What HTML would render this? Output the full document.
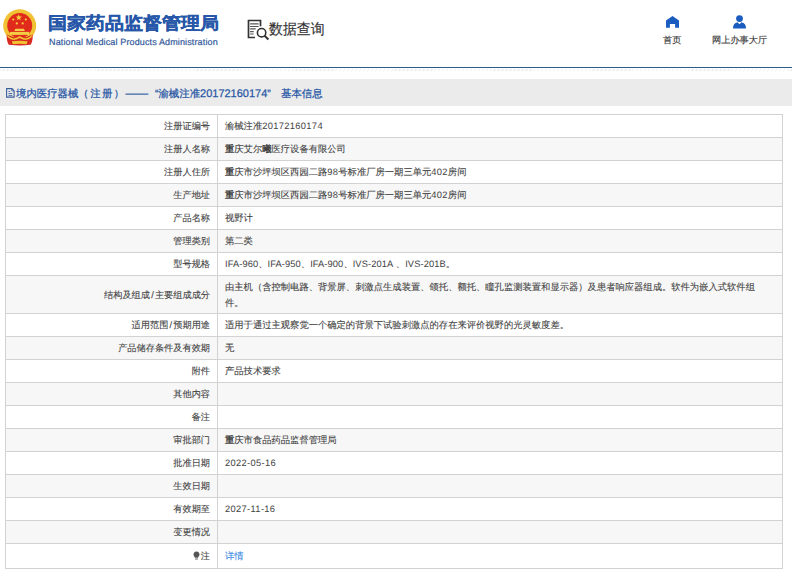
<!DOCTYPE html>
<html><head><meta charset="utf-8">
<style>
*{margin:0;padding:0;box-sizing:border-box}
html,body{width:792px;height:576px;overflow:hidden;background:#fff}
body{position:relative;font-family:"Liberation Sans",sans-serif;color:#333;text-rendering:geometricPrecision}
.abs{position:absolute}
#title{left:48px;top:10px;font-size:19px;font-weight:bold;color:#2757a8;white-space:nowrap;line-height:28px;transform:scaleY(0.91);transform-origin:0 23px;-webkit-text-stroke:0.35px #2757a8}
#sub{left:49px;top:36px;font-size:9px;letter-spacing:0.13px;color:#33599b;-webkit-text-stroke:0.2px #33599b;white-space:nowrap;line-height:12px}
#sq{left:269px;top:18px;font-size:13.9px;color:#333;white-space:nowrap;line-height:20px;transform:scaleY(1.07);transform-origin:0 0;-webkit-text-stroke:0.15px #333}
.nav{font-size:9.2px;color:#3c3c3c;-webkit-text-stroke:0.15px #3c3c3c;white-space:nowrap;line-height:12px}
#bline{left:0;top:67px;width:792px;height:1px;background:#2b5a8a}
#dline{left:0;top:69px;width:792px;height:2px;background:repeating-linear-gradient(135deg,#ebebeb 0 1px,#fff 1px 2.8px)}
#bar{left:0;top:79px;width:792px;height:27px;background:#ebebeb}
#bartxt{left:16px;top:86.5px;font-size:10.4px;color:#2857a5;-webkit-text-stroke:0.25px #2857a5;white-space:nowrap;line-height:15px}
#tbl{left:5px;top:114px;width:778px;height:455px;border:1px solid #d2d2d2}
.row{position:absolute;left:0;width:776px;border-bottom:1px solid #d2d2d2}
.row.g{background:#f7f7f7}
.lab{position:absolute;left:0;width:212px;top:0;bottom:0;border-right:1px solid #d2d2d2}
.lab span{position:absolute;right:7px;white-space:nowrap}
.val{position:absolute;left:219px;white-space:nowrap;font-size:9.3px!important}
.t{font-size:9.2px;color:#424242;line-height:12px;-webkit-text-stroke:0.1px #424242}
.d{letter-spacing:0.1px;-webkit-text-stroke:0}
.n{letter-spacing:0.35px;-webkit-text-stroke:0}
b{font-weight:bold;-webkit-text-stroke:0}
.bd{font-size:11px;position:static!important}
#bartxt>span{position:absolute;top:0}
</style></head><body>
<!-- emblem -->
<svg class="abs" style="left:0;top:5px" width="40" height="45" viewBox="0 5 40 45">
  <circle cx="19.7" cy="25.7" r="16.5" fill="#f0c234"/>
  <circle cx="19.7" cy="25.6" r="12.5" fill="#df2a1c"/>
  <path d="M6.8 34.5 Q6.3 41 8.8 44.8 Q19.7 46.3 30.6 44.8 Q33.1 41 32.6 34.5 Q26 38 19.7 37.5 Q13.4 38 6.8 34.5 Z" fill="#d92a1f"/>
  <rect x="10" y="31.9" width="19.3" height="3" fill="#f3cc45"/>
  <path d="M14.3 31 L15.4 28.7 H23.9 L24.9 31 Z" fill="#f3cc45"/>
  <polygon points="18.8,14.3 19.6,16.6 22,16.6 20.1,18 20.8,20.3 18.8,18.9 16.8,20.3 17.5,18 15.6,16.6 18,16.6" fill="#f7d23d"/>
  <circle cx="13.3" cy="19.5" r="1.1" fill="#f7d23d"/>
  <circle cx="25.8" cy="19.5" r="1.1" fill="#f7d23d"/>
  <circle cx="16.8" cy="23.4" r="1.1" fill="#f7d23d"/>
  <circle cx="22.7" cy="23.4" r="1.1" fill="#f7d23d"/>
  <path d="M7.2 34.8 Q10.5 38.3 13.5 38.4 Q16.5 38.3 19.7 36 Q22.9 38.3 25.9 38.4 Q28.9 38.3 32.2 34.8 L31.6 37.3 Q28.5 40 25.9 40.1 Q22.9 40 19.7 38.1 Q16.5 40 13.5 40.1 Q10.9 40 7.8 37.3 Z" fill="#f0c234"/>
  <path d="M11.8 41.3 Q19.7 40 27.6 41.3 L26.6 44.2 Q19.7 43.2 12.8 44.2 Z" fill="#f0c234"/>
</svg>
<div id="title" class="abs">国家药品监督管理局</div>
<div id="sub" class="abs">National Medical Products Administration</div>
<!-- search icon -->
<svg class="abs" style="left:246px;top:18px" width="26" height="26" viewBox="0 0 26 26">
  <path d="M14.5 8.3 V2.5 H2.5 V19.5 H9" fill="none" stroke="#333" stroke-width="1.7"/>
  <path d="M4.1 5.8 H12.6 M4.1 8.5 H12.6 M4.1 10.9 H9.7 M4.1 13.6 H7.7 M4.1 16 H7.7" stroke="#555" stroke-width="1.2"/>
  <circle cx="15.6" cy="14.7" r="4.2" fill="#fff" stroke="#333" stroke-width="1.6"/>
  <path d="M18.6 17.7 L22.4 21.5" stroke="#333" stroke-width="2"/>
</svg>
<div id="sq" class="abs">数据查询</div>
<!-- home icon -->
<svg class="abs" style="left:664px;top:14px" width="18" height="16" viewBox="0 0 18 16">
  <path d="M2 6.5 L8.5 2 L15 6.5 V13.7 H11.1 V9.9 H5.9 V13.7 H2 Z" fill="#1a5cbf"/>
</svg>
<div class="abs nav" style="left:663px;top:34px">首页</div>
<!-- user icon -->
<svg class="abs" style="left:730px;top:12px" width="20" height="18" viewBox="0 0 20 18">
  <circle cx="9.5" cy="6.6" r="3.4" fill="#1a5cbf"/>
  <path d="M3 16.5 Q3 11 7.5 10.2 L9.5 12.2 L11.5 10.2 Q16 11 16 16.5 Z" fill="#1a5cbf"/>
</svg>
<div class="abs nav" style="left:712px;top:34px">网上办事大厅</div>

<div id="bline" class="abs"></div>
<div id="dline" class="abs"></div>
<div id="bar" class="abs"></div>
<svg class="abs" style="left:0;top:80px" width="20" height="22" viewBox="0 80 20 22">
  <path d="M6.6 88.6 H12 L14.1 90.7 V97.1 H6.6 Z" fill="none" stroke="#3a5d9c" stroke-width="1.1"/>
  <path d="M11.8 88.8 V90.9 H14" fill="none" stroke="#3a5d9c" stroke-width="0.9"/>
  <path d="M8.5 91.5 H10.2 M8.5 93.5 H12.3 M8.5 95.4 H12.3" stroke="#3a5d9c" stroke-width="0.9"/>
</svg>
<div id="bartxt" class="abs"><span style="left:0">境内医疗器械<span class="bd" style="font-size:10.4px;letter-spacing:1.4px">（注册）</span></span><span style="left:109.5px;font-size:11.3px">——</span><span style="left:139px">“渝械注准<span class="bd">20172160174</span>”</span><span style="left:265px">基本信息</span></div>

<div id="tbl" class="abs">
<div class="row" style="top:0px;height:23px"><div class="lab"><span class="t" style="top:5px">注册证编号</span></div><div class="val t" style="top:5px">渝械注准<span class="n">20172160174</span></div></div>
<div class="row g" style="top:23px;height:23px"><div class="lab"><span class="t" style="top:5px">注册人名称</span></div><div class="val t" style="top:5px"><b>重</b>庆艾尔<b>曦</b>医疗设备有限公司</div></div>
<div class="row" style="top:46px;height:23px"><div class="lab"><span class="t" style="top:5px">注册人住所</span></div><div class="val t" style="top:5px"><b>重</b>庆市沙坪坝区西园二路<span class="n">98</span>号标准厂房一期三单元<span class="n">402</span>房间</div></div>
<div class="row g" style="top:69px;height:23px"><div class="lab"><span class="t" style="top:5px">生产地址</span></div><div class="val t" style="top:5px"><b>重</b>庆市沙坪坝区西园二路<span class="n">98</span>号标准厂房一期三单元<span class="n">402</span>房间</div></div>
<div class="row" style="top:92px;height:23px"><div class="lab"><span class="t" style="top:5px">产品名称</span></div><div class="val t" style="top:5px">视野计</div></div>
<div class="row g" style="top:115px;height:23px"><div class="lab"><span class="t" style="top:5px">管理类别</span></div><div class="val t" style="top:5px">第二类</div></div>
<div class="row" style="top:138px;height:23px"><div class="lab"><span class="t" style="top:5px">型号规格</span></div><div class="val t" style="top:5px"><span class="d">IFA-960</span>、<span class="d">IFA-950</span>、<span class="d">IFA-900</span>、<span class="d">IVS-201A</span> 、<span class="d">IVS-201B</span>。</div></div>
<div class="row g" style="top:161px;height:38px"><div class="lab"><span class="t" style="top:13px">结构及组成<span style="position:static;margin:0 1.2px">/</span>主要组成成分</span></div><div class="val t" style="top:2.5px;line-height:16.2px">由主机（含控制电路、背景屏、刺激点生成装置、颌托、额托、瞳孔监测装置和显示器）及患者响应器组成。软件为嵌入式软件组<br>件。</div></div>
<div class="row" style="top:199px;height:23px"><div class="lab"><span class="t" style="top:5px">适用范围<span style="position:static;margin:0 1.2px">/</span>预期用途</span></div><div class="val t" style="top:5px">适用于通过主观察觉一个确定的背景下试验刺激点的存在来评价视野的光灵敏度差。</div></div>
<div class="row g" style="top:222px;height:23px"><div class="lab"><span class="t" style="top:5px">产品储存条件及有效期</span></div><div class="val t" style="top:5px">无</div></div>
<div class="row" style="top:245px;height:23px"><div class="lab"><span class="t" style="top:5px">附件</span></div><div class="val t" style="top:5px">产品技术要求</div></div>
<div class="row g" style="top:268px;height:23px"><div class="lab"><span class="t" style="top:5px">其他内容</span></div><div class="val t" style="top:5px"></div></div>
<div class="row" style="top:291px;height:23px"><div class="lab"><span class="t" style="top:5px">备注</span></div><div class="val t" style="top:5px"></div></div>
<div class="row g" style="top:314px;height:23px"><div class="lab"><span class="t" style="top:5px">审批部门</span></div><div class="val t" style="top:5px"><b>重</b>庆市食品药品监督管理局</div></div>
<div class="row" style="top:337px;height:23px"><div class="lab"><span class="t" style="top:5px">批准日期</span></div><div class="val t" style="top:5px"><span class="n">2022-05-16</span></div></div>
<div class="row g" style="top:360px;height:23px"><div class="lab"><span class="t" style="top:5px">生效日期</span></div><div class="val t" style="top:5px"></div></div>
<div class="row" style="top:383px;height:23px"><div class="lab"><span class="t" style="top:5px">有效期至</span></div><div class="val t" style="top:5px"><span class="n">2027-11-16</span></div></div>
<div class="row g" style="top:406px;height:23px"><div class="lab"><span class="t" style="top:5px">变更情况</span></div><div class="val t" style="top:5px"></div></div>
<div class="row" style="top:429px;height:24px;border-bottom:none"><div class="lab"><span class="t" style="top:6px"><svg style="display:inline-block;vertical-align:-1px;margin-right:1px" width="7" height="9" viewBox="0 0 7 9"><path d="M3.5 0.5 C1.5 0.5 0.5 2 0.5 3.5 C0.5 5 1.6 5.6 2 6.8 H5 C5.4 5.6 6.5 5 6.5 3.5 C6.5 2 5.5 0.5 3.5 0.5 Z M2.2 7.4 H4.8 V8.4 H2.2 Z" fill="#555"/></svg>注</span></div><div class="val t" style="top:6px;color:#3a88e6;-webkit-text-stroke-color:#3a88e6">详情</div></div>
</div>
</body></html>
